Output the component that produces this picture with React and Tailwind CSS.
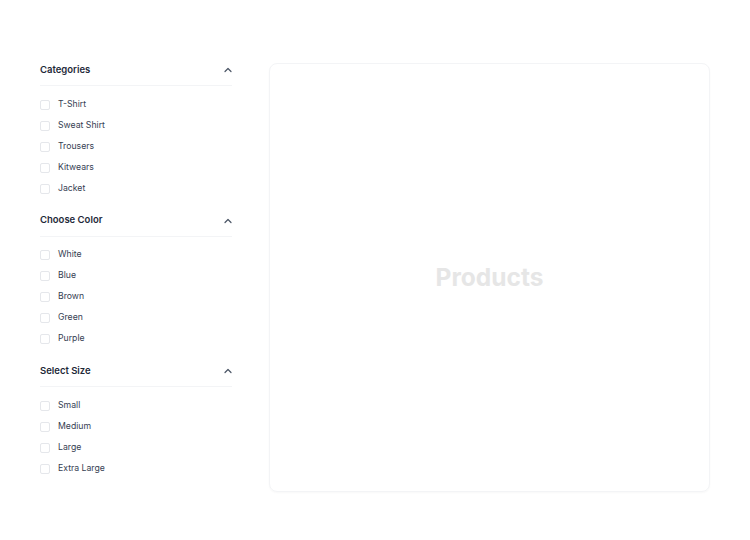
import React from 'react';

const filters = [
    { title: 'Categories', options: ['T-Shirt', 'Sweat Shirt', 'Trousers', 'Kitwears', 'Jacket'] },
    { title: 'Choose Color', options: ['White', 'Blue', 'Brown', 'Green', 'Purple'] },
    { title: 'Select Size', options: ['Small', 'Medium', 'Large', 'Extra Large'] },
];

function ChevronUp() {
    return (
        <svg width="8" height="8" viewBox="0 0 8 8" fill="none" className="text-gray-600">
            <polyline points="1,5.5 4,2.5 7,5.5" stroke="currentColor" strokeWidth="1.2" strokeLinecap="round" strokeLinejoin="round" />
        </svg>
    );
}

function FilterSection({ title, options, first }) {
    return (
        <div className={first ? '' : 'mt-[14.5px]'}>
            <div className="flex items-center justify-between h-[14px]">
                <h3 className="text-[9.5px] font-semibold text-gray-800">{title}</h3>
                <ChevronUp />
            </div>
            <div className="mt-2 border-b border-gray-100" />
            <ul className="mt-2">
                {options.map(opt => (
                    <li key={opt} className="flex items-center h-[21px]">
                        <span className="w-[10px] h-[10px] rounded-[2px] border border-gray-200 bg-white" />
                        <span className="ml-2 text-[8.7px] text-gray-700">{opt}</span>
                    </li>
                ))}
            </ul>
        </div>
    );
}

export default function App() {
    return (
        <div className="min-h-[540px] bg-white" style={{ fontFamily: 'Inter, "Noto Sans", sans-serif' }}>
            <div className="flex pt-[63px] pl-[40px] pr-[40px]">
                <aside className="w-[192px] shrink-0">
                    {filters.map((f, i) => (
                        <FilterSection key={f.title} title={f.title} options={f.options} first={i === 0} />
                    ))}
                </aside>
                <main className="ml-[37px] w-[441px] h-[429px] rounded-lg border border-gray-100 shadow-[0_1px_2px_rgba(0,0,0,0.03)] flex items-center justify-center">
                    <span className="text-[24.5px] font-bold text-[#e6e6e6]">Products</span>
                </main>
            </div>
        </div>
    );
}
